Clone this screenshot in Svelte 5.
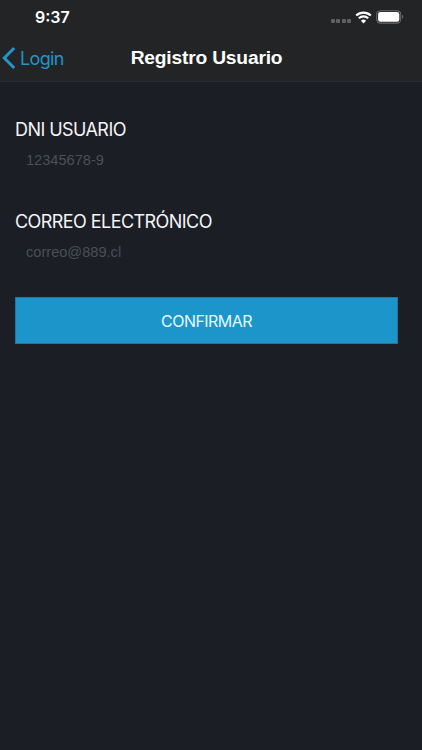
<script>
    let dni = $state('')
    let correo = $state('')
</script>

<div class="screen">
    <header>
        <div class="status">
            <span class="time">9:37</span>
            <div class="indicators">
                <div class="dots"><i></i><i></i><i></i><i></i></div>
                <svg class="wifi" width="17" height="13" viewBox="0 0 17 13">
                    <path d="M1.2 4.5a10.6 10.6 0 0 1 14.6 0M3.8 7.3a6.8 6.8 0 0 1 9.4 0" fill="none" stroke="#fff" stroke-width="2.1"/>
                    <path d="M8.5 12.4 5.9 9.7a3.8 3.8 0 0 1 5.2 0z" fill="#fff"/>
                </svg>
                <svg class="battery" width="28" height="14" viewBox="0 0 28 14">
                    <rect x=".7" y=".7" width="24" height="12.4" rx="3.6" fill="none" stroke="#67686a" stroke-width="1.1"/>
                    <rect x="2.1" y="2.1" width="21.2" height="9.6" rx="2.2" fill="#fff"/>
                    <path d="M26 4.8c1.6.6 1.6 3.6 0 4.2z" fill="#67686a"/>
                </svg>
            </div>
        </div>
        <nav>
            <button class="back" type="button">
                <svg width="14" height="24" viewBox="0 0 14 24">
                    <path d="M12.2 2 2.3 12l9.9 10" fill="none" stroke="currentColor" stroke-width="3"/>
                </svg>
                <span>Login</span>
            </button>
            <h1>Registro Usuario</h1>
        </nav>
    </header>
    <form>
        <div class="field">
            <label for="dni">DNI USUARIO</label>
            <input id="dni" type="text" placeholder="12345678-9" bind:value={dni}>
        </div>
        <div class="field">
            <label for="correo">CORREO ELECTRÓNICO</label>
            <input id="correo" type="text" placeholder="correo@889.cl" bind:value={correo}>
        </div>
        <button class="confirm" type="button">CONFIRMAR</button>
    </form>
</div>

<style>
    :global(body){
        margin: 0;
        background-color: #1b1e25;
    }
    .screen{
        height: 750px;
        overflow: hidden;
        background-color: #1b1e25;
        font-family: Inter, "Liberation Sans", sans-serif;
        color: #f4f4f5;
    }
    button{
        border: 0;
        padding: 0;
        background: none;
        font-family: inherit;
    }
    header{
        box-sizing: border-box;
        height: 82px;
        background-color: #222425;
        border-bottom: 1px solid #292c33;
    }
    .status{
        display: flex;
        justify-content: space-between;
        align-items: center;
        height: 34px;
        padding: 0 18px 0 35px;
    }
    .time{
        font-size: 16px;
        font-weight: 600;
        line-height: 34px;
        color: white;
    }
    .indicators{
        display: flex;
        align-items: center;
    }
    .dots{
        display: flex;
        gap: 1.3px;
        margin: 8px 4px 0 0;
        i{
            width: 4px;
            height: 4px;
            border-radius: 1px;
            background-color: #606163;
        }
    }
    .wifi{
        margin-right: 4px;
    }
    nav{
        display: grid;
        grid-template-columns: 1fr auto 1fr;
        align-items: center;
        height: 48px;
        padding-right: 9px;
    }
    .back{
        display: flex;
        align-items: center;
        gap: 4px;
        padding-left: 2px;
        font-size: 18px;
        letter-spacing: -.65px;
        color: #2494c9;
    }
    h1{
        margin: 0;
        font: bold 19.2px "Liberation Sans", Arial, sans-serif;
        letter-spacing: -.18px;
        color: white;
    }
    form{
        display: flex;
        flex-direction: column;
        padding: 36px 24px 0 15px;
    }
    .field{
        display: flex;
        flex-direction: column;
        height: 92px;
    }
    label{
        font-size: 18px;
        line-height: 24px;
        letter-spacing: -.56px;
    }
    input{
        height: 36px;
        padding: 0 11px;
        border: 0;
        outline: 0;
        background: transparent;
        font: 14.6px "Liberation Sans", Arial, sans-serif;
        color: white;
        &::placeholder{
            color: #4c4f55;
            opacity: 1;
        }
    }
    .confirm{
        box-sizing: border-box;
        height: 47px;
        margin-top: -5px;
        border: 1px solid #24759c;
        background-color: #1b95ca;
        font-size: 16px;
        letter-spacing: -.55px;
        color: #e8f7ff;
    }
</style>
